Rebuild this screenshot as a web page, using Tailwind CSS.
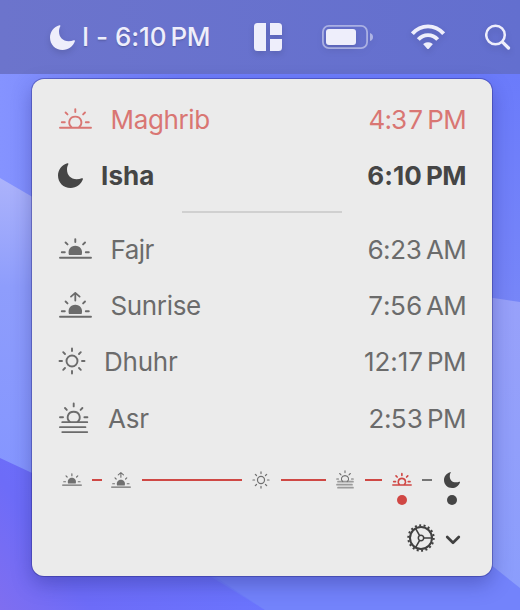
<!DOCTYPE html>
<html lang="en">
<head>
<meta charset="utf-8">
<title>Prayer times</title>
<script src="https://cdn.jsdelivr.net/npm/@tailwindcss/browser@4"></script>
</head>
<body class="relative isolate h-[610px] w-[520px] overflow-hidden font-['Inter','Liberation_Sans',sans-serif] text-[26px] leading-8">

<!-- Wallpaper -->
<svg class="absolute inset-0 -z-10" width="520" height="610" viewBox="0 0 520 610">
  <defs>
    <linearGradient id="w0" x1="0" y1="0" x2="1" y2="0"><stop offset="0" stop-color="#8593ff"/><stop offset=".35" stop-color="#6f7dfb"/><stop offset="1" stop-color="#6c7dff"/></linearGradient>
    <linearGradient id="w1" x1="0" y1="0" x2="0" y2="1"><stop offset="0" stop-color="#acb3fb"/><stop offset=".35" stop-color="#8e9dfc"/><stop offset="1" stop-color="#8495ff"/></linearGradient>
    <linearGradient id="w2" x1="0" y1="1" x2="1" y2=".6"><stop offset="0" stop-color="#7f6ef0"/><stop offset=".3" stop-color="#6d6cf8"/><stop offset="1" stop-color="#6a76ff"/></linearGradient>
    <linearGradient id="w3" x1="0" y1="0" x2="0" y2="1"><stop offset="0" stop-color="#98a1fa"/><stop offset="1" stop-color="#8b9dfc"/></linearGradient>
    <linearGradient id="w4" x1="0" y1="0" x2="0" y2="1"><stop offset="0" stop-color="#6b7bfb"/><stop offset="1" stop-color="#7786f8"/></linearGradient>
    <symbol id="moon" viewBox="0 0 25 25"><path fill="currentColor" d="M9.4.2C10.2 0 10.7.6 10.3 1.3 9.5 2.8 9 4.6 9 6.6 9 12.4 12.8 16.2 18.6 16.2 20.6 16.2 22.2 15.9 23.7 15.3 24.7 14.9 25.2 15.5 24.9 16.3 23.1 21.5 18.4 25 12.6 25 5.4 25 0 19.6 0 12.5 0 6.7 3.9 1.8 9.4.2Z"/></symbol>
    <symbol id="rays" viewBox="0 0 33 26"><path fill="none" stroke="currentColor" stroke-width="1.9" stroke-linecap="round" d="M1 24.7H32M6.600 9.500 8.500 11.400M26 9.500 24.100 11.400M2.800 19.200H5.800M26.800 19.200H29.800"/></symbol>
    <symbol id="fajr" viewBox="0 0 33 26"><use href="#rays" width="33" height="26"/><path stroke="currentColor" stroke-width="1.900" stroke-linecap="round" d="M16.300 6.100V9.100"/><path fill="currentColor" d="M10 22C8.300 16.800 11.600 12.700 16.300 12.700S24.300 16.800 22.600 22Z"/></symbol>
    <symbol id="sunrise" viewBox="0 0 33 26"><use href="#rays" width="33" height="26"/><path fill="none" stroke="currentColor" stroke-width="1.800" stroke-linecap="round" stroke-linejoin="round" d="M16.300 .9V8.500M12 4.600 16.300 .9 20.600 4.600"/><path fill="currentColor" d="M10 22C8.300 16.800 11.600 12.700 16.300 12.700S24.300 16.800 22.600 22Z"/></symbol>
    <symbol id="maghrib" viewBox="0 0 33 26"><use href="#rays" width="33" height="26"/><path fill="none" stroke="currentColor" stroke-width="1.900" stroke-linecap="round" d="M16.300 6.100V9.100M12.300 24C8.300 20.300 10.400 13.600 16.300 13.600S24.300 20.300 20.300 24"/></symbol>
    <symbol id="maghrib-mini" viewBox="0 0 33 26"><path fill="none" stroke="currentColor" stroke-width="2.700" stroke-linecap="round" d="M1.400 24.500H31.600M6.600 9.500 8.500 11.400M26 9.500 24.100 11.400M2.800 19H5.800M26.800 19H29.800M16.300 5.800V8.800M12.300 24C8.300 20.300 10.400 13.600 16.300 13.600S24.300 20.300 20.300 24"/></symbol>
    <symbol id="dhuhr" viewBox="0 0 28 28"><g fill="none" stroke="currentColor" stroke-width="1.900" stroke-linecap="round"><circle cx="14" cy="14" r="5.500"/><path d="M14 1.500V4M14 24V26.500M1.500 14H4M24 14H26.500M5.200 5.200 7 7M21 21 22.800 22.800M22.800 5.200 21 7M7 21 5.200 22.800"/></g></symbol>
    <symbol id="asr" viewBox="0 0 30 31"><g fill="none" stroke="currentColor" stroke-linecap="round"><path stroke-width="1.900" d="M14.700 1.500V4.400M6 6 7.800 7.900M23.400 6 21.600 7.900M1 15.200H4M25.400 15.200H28.400M10.900 20C6.700 16.400 8.700 9.800 14.700 9.800S22.700 16.400 18.500 20"/><path stroke-width="1.700" d="M3.200 20.200H28.300M.9 25.200H26.500M3.200 30.100H28.300"/></g></symbol>
    <symbol id="asr-mini" viewBox="0 0 18 19"><g fill="none" stroke="currentColor"><path stroke-width="1.100" stroke-linecap="round" d="M9 .8V2.600M3.700 3.500 5 4.800M14.300 3.500 13 4.800M.7 9H2.500M15.500 9H17.300M6.800 11.600C4.200 9.500 5.400 5.600 9 5.600S13.800 9.500 11.200 11.600"/><path stroke-width="1.700" stroke-linecap="round" opacity=".65" d="M2 11.700H17M1 14.700H16M2 17.700H17"/></g></symbol>
  </defs>
  <rect width="520" height="610" fill="url(#w0)"/>
  <path d="M480 74H520V310H480Z" fill="url(#w4)"/>
  <path d="M0 178 60 213V490H0Z" fill="url(#w1)"/>
  <path d="M0 458 60 486 210 576 265 610H0Z" fill="url(#w2)"/>
  <path d="M190 560 H520V610H265Z" fill="#7383fb"/>
  <path d="M480 296 520 302V588L480 556Z" fill="url(#w3)"/>
</svg>

<!-- Menu bar -->
<header class="relative flex h-[74px] items-center bg-linear-to-r from-[#6c74cc] to-[#636fcf] pl-[50px] text-[#eeeefb]">
  <svg class="size-[25px] shrink-0 drop-shadow-md"><use href="#moon"/></svg>
  <span class="ml-[7px] w-[172px] shrink-0 whitespace-nowrap text-[26px] font-medium tracking-[-0.3px] [word-spacing:0.6px] text-shadow-sm">I - <span class="tracking-[-0.1px]">6:10</span><span class="ml-[4px]">PM</span></span>
  <svg class="size-7 shrink-0 drop-shadow-md" viewBox="0 0 28 28" fill="currentColor"><path d="M3.500 0H12V28H3.500Q0 28 0 24.500V3.500Q0 0 3.500 0ZM16 0H24.500Q28 0 28 3.500V12H16ZM16 16H28V24.500Q28 28 24.500 28H16Z"/></svg>
  <svg class="ml-10 h-6 w-[51px] shrink-0 drop-shadow-md" viewBox="0 0 51 24"><rect x=".9" y=".9" width="44.200" height="22.200" rx="6" fill="none" stroke="#fff" stroke-opacity=".45" stroke-width="1.800"/><rect x="4" y="4" width="30" height="16" rx="3" fill="currentColor"/><path d="M48 8Q51 9 51 12T48 16Z" fill="#fff" fill-opacity=".48"/></svg>
  <svg class="ml-[38px] mt-[-1px] h-[26px] w-[34px] shrink-0 drop-shadow-md" viewBox="0 0 34 26" fill="none" stroke="currentColor" stroke-width="3.900"><path d="M1.400 9.700C10-.1 24-.1 32.600 9.700"/><path d="M7.300 15.500C12.700 9.600 21.300 9.600 26.700 15.500"/><path fill="currentColor" stroke="none" d="M12.500 20.600Q12.200 20 12.900 19.500 17 16.800 21.100 19.500 21.800 20 21.500 20.600L17.800 24.700Q17 25.400 16.200 24.700Z"/></svg>
  <svg class="ml-10 size-[26px] shrink-0 drop-shadow-md" viewBox="0 0 26 26" fill="none" stroke="currentColor" stroke-linecap="round"><circle cx="10.500" cy="11" r="9.300" stroke-width="2.500"/><path stroke-width="3.200" d="M17.800 18.300 23.500 24"/></svg>
</header>

<!-- Times panel -->
<main class="relative ml-8 mt-[5px] flex h-[497px] w-[460px] flex-col rounded-xl bg-[#ebebeb] pl-[26px] pr-[26px] text-[#6b6b6b] shadow-[0_0_0_1px_rgba(40,40,130,0.4),0_8px_20px_rgba(30,30,110,0.34)]">
  <div class="mt-[25px] flex h-8 items-center text-[#d97673]"><svg class="ml-px mt-[-8px] h-[26px] w-[33px]"><use href="#maghrib"/></svg><span class="ml-[18.5px] tracking-[-0.35px]">Maghrib</span><span class="ml-auto tracking-[-0.7px] tabular-nums">4:37<span class="ml-[4px]">PM</span></span></div>
  <div class="mt-6 flex h-8 items-center font-bold text-[#454545]"><svg class="mt-[-2px] size-[25px]"><use href="#moon"/></svg><span class="ml-[18px] tracking-[0.1px]">Isha</span><span class="ml-auto tracking-[-0.5px]"><span class="tracking-[0.1px]">6:10</span><span class="ml-[4px]">PM</span></span></div>
  <div class="ml-[124px] mt-[19px] h-0.5 w-40 shrink-0 bg-[#d0d0d0]"></div>
  <div class="mt-[21px] flex h-8 items-center"><svg class="ml-px mt-[-8px] h-[26px] w-[33px]"><use href="#fajr"/></svg><span class="ml-[18.5px] tracking-[-0.5px]">Fajr</span><span class="ml-auto tracking-[-0.7px] tabular-nums">6:23<span class="ml-[4px]">AM</span></span></div>
  <div class="mt-6 flex h-8 items-center"><svg class="ml-px mt-[-3px] h-[26px] w-[33px]"><use href="#sunrise"/></svg><span class="ml-[18.5px] tracking-[-0.35px]">Sunrise</span><span class="ml-auto tracking-[-0.7px] tabular-nums">7:56<span class="ml-[4px]">AM</span></span></div>
  <div class="mt-6 flex h-8 items-center"><svg class="mt-[-2px] size-7"><use href="#dhuhr"/></svg><span class="ml-[18px] tracking-[-0.25px]">Dhuhr</span><span class="ml-auto tracking-[-0.5px]"><span class="tracking-[-0.05px]">12:17</span><span class="ml-[4px]">PM</span></span></div>
  <div class="mt-[25px] flex h-8 items-center"><svg class="ml-px mt-[-4px] h-[31px] w-[30px]"><use href="#asr"/></svg><span class="ml-[19px] tracking-[-0.25px]">Asr</span><span class="ml-auto tracking-[-0.6px] tabular-nums">2:53<span class="ml-[4px]">PM</span></span></div>

  <!-- Day timeline -->
  <div class="mt-[33px] flex h-6 items-center pl-1 text-[#707070]">
    <svg class="mt-[-5px] h-4 w-5 shrink-0"><use href="#fajr"/></svg>
    <i class="ml-[10px] h-0.5 w-[10px] bg-[#cf4844]"></i>
    <svg class="mt-[-1px] ml-[9px] h-4 w-5 shrink-0"><use href="#sunrise"/></svg>
    <i class="ml-[11px] h-0.5 w-[100px] bg-[#cf4844]"></i>
    <svg class="mt-[-1px] ml-[10px] size-[18px] shrink-0"><use href="#dhuhr"/></svg>
    <i class="ml-[11px] h-0.5 w-[45px] bg-[#cf4844]"></i>
    <svg class="mt-[-1px] ml-[10px] h-[19px] w-[18px] shrink-0"><use href="#asr-mini"/></svg>
    <i class="ml-[11px] h-0.5 w-[17px] bg-[#cf4844]"></i>
    <svg class="mt-[-4px] ml-[10px] h-4 w-5 shrink-0 text-[#d04744]"><use href="#maghrib-mini"/></svg>
    <i class="ml-[10px] h-0.5 w-[10px] bg-[#757575]"></i>
    <svg class="ml-3 size-4 shrink-0 text-[#454545]"><use href="#moon"/></svg>
  </div>
  <div class="mt-[3px] flex justify-end gap-10 pr-[9px]"><i class="size-[10px] rounded-full bg-[#d04744]"></i><i class="size-[10px] rounded-full bg-[#454545]"></i></div>

  <!-- Settings -->
  <div class="mt-[19px] flex items-center justify-end pr-[5px] text-[#404040]">
    <svg class="size-7" viewBox="-14 -14 28 28" fill="none" stroke="currentColor"><circle r="12.700" stroke-width="2" stroke-dasharray="2 2.433"/><circle r="11" stroke-width="2"/><circle r="2.700" stroke-width="1.500"/><path stroke-width="1.600" d="M2.700 0H11M-1.350-2.340-5.500-9.530M-1.350 2.340-5.500 9.530"/></svg>
    <svg class="ml-[10px] mt-[3px] h-[10px] w-4" viewBox="0 0 16 10" fill="none" stroke="currentColor" stroke-width="2.700" stroke-linecap="round" stroke-linejoin="round"><path d="M2.200 2 8 7.700 13.800 2"/></svg>
  </div>
</main>
</body>
</html>
